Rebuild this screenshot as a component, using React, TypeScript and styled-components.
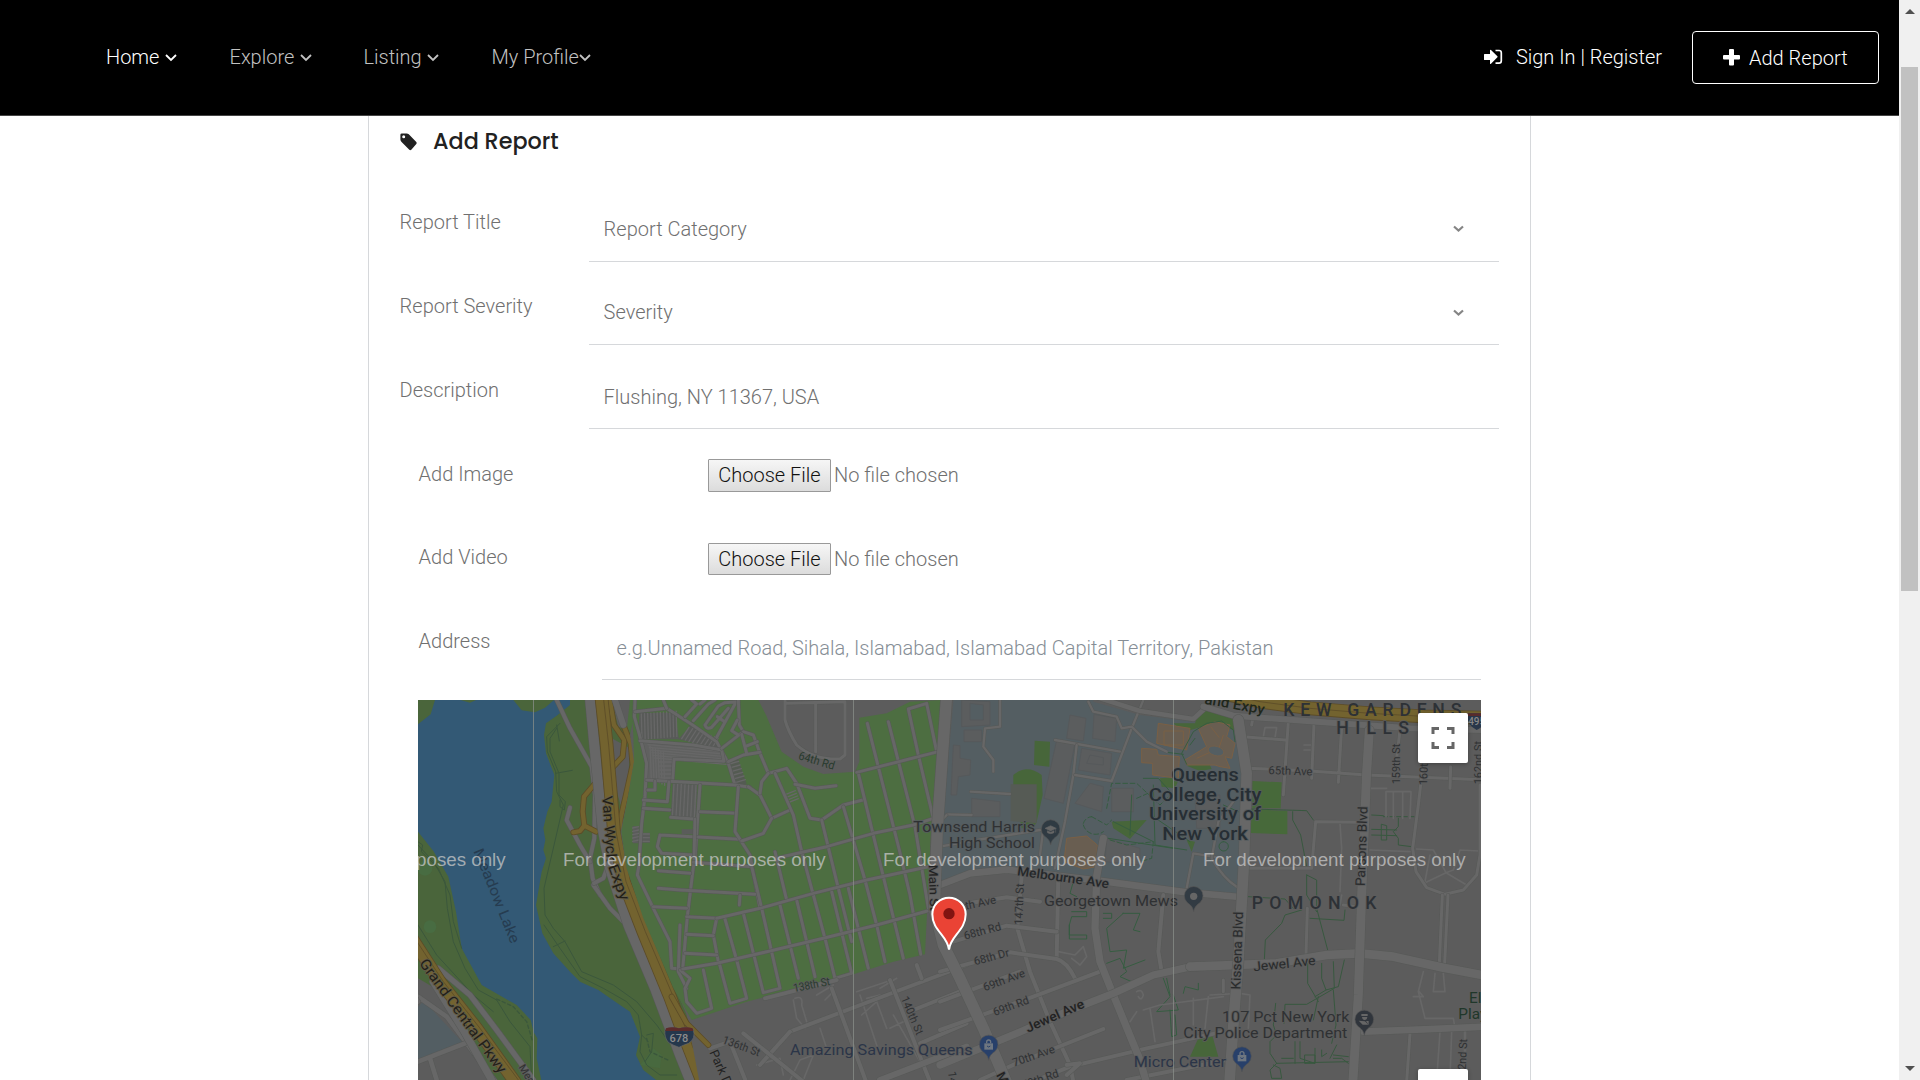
import React from "react";
import styled, { createGlobalStyle } from "styled-components";

const GlobalStyle = createGlobalStyle`
  * { box-sizing: border-box; }
  html, body { margin: 0; padding: 0; background: #fff; overflow: hidden; }
  body { font-family: Roboto, "Liberation Sans", sans-serif; font-weight: 300; font-size: 20px; line-height: 24px; color: #707070; }
`;

const Page = styled.div`
  display: flex;
  width: 1920px;
  height: 1080px;
  overflow: hidden;
`;
const Main = styled.div`
  flex: 1;
  display: flex;
  flex-direction: column;
`;
const Header = styled.header`
  height: 116px;
  flex: none;
  background: #000;
  border-bottom: 1px solid #444;
  display: flex;
  align-items: flex-start;
  justify-content: space-between;
  padding: 31px 20px 0 106px;
`;
const Nav = styled.nav`
  display: flex;
  padding-top: 14px;
`;
const NavItem = styled.a<{ $active?: boolean; $width: number; $gap: number }>`
  display: flex;
  width: ${(p) => p.$width}px;
  gap: ${(p) => p.$gap}px;
  color: ${(p) => (p.$active ? "#fff" : "#c2c2c2")};
  white-space: nowrap;
  svg { width: 12px; height: 8px; margin-top: 9px; flex: none; }
`;
const Actions = styled.div`
  display: flex;
  color: #fff;
`;
const SignIn = styled.a`
  display: flex;
  gap: 13px;
  padding-top: 14px;
  margin-right: 30px;
  white-space: nowrap;
  svg { margin-top: 4px; }
`;
const AddButton = styled.button`
  display: flex;
  gap: 9px;
  width: 187px;
  height: 53px;
  padding: 14px 0 0 30px;
  border: 1px solid #fff;
  border-radius: 4px;
  background: transparent;
  color: #fff;
  font: inherit;
  white-space: nowrap;
  svg { margin-top: 3px; }
`;
const Card = styled.section`
  width: 1163px;
  flex: 1;
  min-height: 0;
  overflow: hidden;
  margin-left: 368px;
  border: solid #d6d8db;
  border-width: 0 1px;
  padding: 0 31px 0 30px;
`;
const Title = styled.h4`
  margin: 0;
  height: 84px;
  padding: 12px 0 0 1px;
  display: flex;
  gap: 15px;
  font-family: Poppins, Inter, sans-serif;
  font-size: 22.3px;
  font-weight: 500;
  line-height: 27px;
  color: #212121;
  svg { margin-top: 5px; }
`;
const Row = styled.div<{ $height?: number; $inset?: boolean }>`
  display: flex;
  height: ${(p) => p.$height ?? 84}px;
  padding: ${(p) => (p.$inset ? "0 18px 0 19px" : "0")};
`;
const Label = styled.label<{ $width: number }>`
  width: ${(p) => p.$width}px;
  flex: none;
  padding: 10px 0 0 0.6px;
  white-space: nowrap;
`;
const Field = styled.div<{ $height: number; $top: number; $muted?: boolean }>`
  flex: 1;
  display: flex;
  justify-content: space-between;
  height: ${(p) => p.$height}px;
  padding: ${(p) => p.$top}px 35px 0 14.6px;
  border-bottom: 1px solid #d6d8db;
  color: ${(p) => (p.$muted ? "#868e96" : "#707070")};
  white-space: nowrap;
`;
const Caret = styled.svg`
  margin-top: 8px;
`;
const FilePick = styled.div<{ $top: number }>`
  display: flex;
  align-items: flex-start;
  gap: 3px;
  padding-top: ${(p) => p.$top}px;
  span { padding-top: 4px; white-space: nowrap; }
`;
const FileButton = styled.button<{ $height: number }>`
  width: 123px;
  height: ${(p) => p.$height}px;
  padding: 0 0 1px;
  border: 1px solid #999;
  border-radius: 1px;
  background: linear-gradient(#f6f6f6, #dcdcdc);
  color: #111;
  font: inherit;
  white-space: nowrap;
`;
const MapFrame = styled.div`
  position: relative;
  width: 1063px;
  height: 380px;
  margin-left: 19px;
  overflow: hidden;
`;
const MapSvg = styled.svg`
  display: block;
`;
const MapControl = styled.button<{ $top: number }>`
  position: absolute;
  right: 13px;
  top: ${(p) => p.$top}px;
  width: 50px;
  height: 50px;
  display: grid;
  place-items: center;
  padding: 0;
  border: 0;
  border-radius: 2px;
  background: #fff;
  box-shadow: 0 1px 4px rgba(0, 0, 0, 0.3);
`;
const Scrollbar = styled.div`
  width: 21px;
  background: #f0f0f0;
  display: flex;
  flex-direction: column;
  align-items: center;
  justify-content: space-between;
  padding: 9px 0;
`;
const Thumb = styled.div`
  width: 17px;
  height: 524px;
  margin: 53px 0 auto;
  background: #c1c1c1;
`;
const Arrow = styled.i<{ $down?: boolean }>`
  border: 5px solid transparent;
  border-width: ${(p) => (p.$down ? "5px 5px 0" : "0 5px 5px")};
  border-color: ${(p) => (p.$down ? "#505050 transparent transparent" : "transparent transparent #505050")};
`;

const LAND = "#5c5c5c";
const ROAD = "#676767";
const PARK = "#4a653b";
const CEMETERY = "#4d6e41";
const CAMPUS = "#545e62";
const GOLD = "#73632f";
const TRAIL = "#3b573c";

type Stroke = { d: string; w?: number; c?: string; dash?: string };

const Lines = ({ items, w = 9, c = ROAD }: { items: (string | Stroke)[]; w?: number; c?: string }) => (
  <g fill="none" strokeLinejoin="round" strokeLinecap="round">
    {items.map((it, i) => {
      const s: Stroke = typeof it === "string" ? { d: it } : it;
      const width = s.w ?? w;
      const color = s.c ?? c;
      return (
        <React.Fragment key={i}>
          {color === ROAD && width > 6 && <path d={s.d} stroke="#575957" strokeWidth={width + 3} />}
          {color === GOLD && <path d={s.d} stroke="#5c4c28" strokeWidth={width + 5} />}
          <path d={s.d} stroke={color} strokeWidth={width} strokeDasharray={s.dash} />
        </React.Fragment>
      );
    })}
  </g>
);

type TagProps = {
  x: number; y: number; size?: number; r?: number; w?: number; color?: string; area?: boolean;
  weight?: number; anchor?: "start" | "middle" | "end"; halo?: string; children: string;
};
const Tag = ({ x, y, size = 34, r = 0, w, color = "#2f3133", area, weight = 400, anchor = "start", halo = LAND, children }: TagProps) => (
  <text
    x={x} y={y} fontSize={size} fontWeight={weight} fill={color} textAnchor={anchor}
    textLength={w} lengthAdjust={area ? "spacing" : "spacingAndGlyphs"} transform={r ? `rotate(${r} ${x} ${y})` : undefined}
    stroke={halo} strokeWidth={halo === "none" ? 0 : 5} paintOrder="stroke" strokeLinejoin="round"
  >
    {children}
  </text>
);

const Poi = ({ x, y, color = "#2f3a42", kind }: { x: number; y: number; color?: string; kind: "school" | "dot" | "bag" | "badge" }) => (
  <g transform={`translate(${x} ${y})`}>
    <path d="M0 46C-3 30-10 26-20 18A28 28 0 1 1 20 18C10 26 3 30 0 46Z" fill={color} stroke="#555" strokeWidth="2" />
    {kind === "dot" && <circle r="11" fill="#666" />}
    {kind === "school" && <path d="M-17-4L0-12L17-4L0 4ZM-10 3V9Q0 15 10 9V3L0 8ZM15-3V9" fill="#666" stroke="#666" strokeWidth="1.5" />}
    {kind === "bag" && (
      <g fill="none" stroke="#6e7680" strokeWidth="4">
        <path d="M-13-5H13V14H-13Z" fill="#6e7680" stroke="none" />
        <path d="M-6-5V-9A6 6 0 0 1 6-9V-5" />
        <path d="M-5 3Q0 9 5 3" stroke={color} strokeWidth="3" />
      </g>
    )}
    {kind === "badge" && <path d="M-9-18H10V-12H-9ZM-7-9H9Q8 0 1 0Q-6 0-7-9ZM-17 2L2 4L12 14H-5ZM5 3H13V15Z" fill="#666" />}
  </g>
);

const hatch = (x: number, y: number, n: number, dx: number, dy: number, lx: number, ly: number) =>
  Array.from({ length: n }, (_, i) => `M${x + i * dx} ${y + i * dy}l${lx} ${ly}`).join("");

const WestShore = () => (
  <g transform="translate(-24 -15)">
    <path d="M0 0H900V1160H0Z" fill={PARK} />
    <path d="M75 15L62 58L24 88V410L70 468L115 545L138 650L155 760L215 870L320 930L362 975L371 1012L382 1030L380 1090L395 1160H745L700 1125L678 1080L690 1025L660 950L630 930L565 885L510 860L480 830L430 775L397 715L378 630L395 530L408 490L400 465L406 435L400 400L412 350L425 320L433 240L408 175L402 120L408 85L440 62L480 30V15H432L405 38L375 52L335 46L310 15H198L180 23L152 15Z" fill="#335975" />
    <circle cx="60" cy="695" r="19" fill="#486c42" /><circle cx="45" cy="520" r="22" fill="#486c42" />
    <path d="M690 1110L730 1060L755 1080L750 1120Z" fill="#48693f" />
    <path d="M24 850L110 900L260 1160H24Z" fill={LAND} />
    <path d="M24 935L42 918L160 1045L24 1095Z" fill="#535e63" />
    <path d="M590 15H700L690 60L700 130L655 120Z" fill={CEMETERY} />
    <path d="M605 15H660L650 105L625 95Z" fill={LAND} />
    <Lines w={3} c={TRAIL} items={[
      "M24 450L70 500L105 560L112 640L130 740L165 820L205 885L260 915", "M24 440L38 450L34 470L85 520L120 600L130 680L155 760", "M24 690L80 780L190 900L250 950", "M260 915L300 980L360 1055L365 1155",
      "M450 85L410 125L412 170L437 230L440 290L460 330L402 580L405 660L430 700L465 740L515 830L610 870L680 920L740 990L790 1060",
      "M440 100L420 130L420 170L447 235L447 300L466 320L463 345L450 335V315M437 235L487 226M440 90L448 138",
      "M402 690L450 760L510 845L580 880L650 920L685 960L695 1020L690 1070L710 1110L750 1140H800", "M710 1020L730 1015L725 1070L705 1100M695 1020L715 1040", "M430 755L465 738"]} />
    <Lines w={4} c={TRAIL} items={[{ d: "M260 912L310 935L350 980L368 1040", dash: "10 8" }, { d: "M710 1030L720 1070L780 1098", dash: "10 8" }]} />
    <Lines w={12} items={["M440 15L480 100L545 215L555 300L553 430L540 490L548 550L570 600", "M480 338L470 375L510 450L540 500", "M550 570L600 640L650 690", "M595 510L580 550L552 565"]} />
    <Lines w={14} items={["M24 905L110 965L260 1165", "M24 920L10 900M24 1100L165 1045M60 1090L80 1155", { d: "M70 860L160 1005L245 1155", w: 22 }, { d: "M85 820L180 900L260 1005L370 1155", w: 16 }]} />
    <Lines c={GOLD} items={[{ d: "M0 720L90 860L200 1000L325 1175", w: 34 }]} />
    <path d="M0 708L100 860L210 1000L340 1175" fill="none" stroke="#5c4c28" strokeWidth="2.5" />
    <path d="M605 130L660 160L655 250L632 330L612 260Z" fill={LAND} />
    <Lines c={GOLD} w={13} items={["M600 20L612 90L643 135L638 185L610 215", "M642 95L662 145L668 210L650 290L632 370L626 440L650 540", "M553 268L522 305L518 350L523 392L558 410M490 412L510 408L523 392"]} />
    <Lines w={30} items={["M540 10L553 150L566 280L578 400L600 520L655 690L735 880L810 1080L850 1180", { d: "M615 15L640 90", w: 18 }]} />
    <Lines c={GOLD} w={36} items={["M574 5L590 150L602 290L612 410L642 560L700 710L780 905L830 1040L885 1180"]} />
    <path d="M580 5L596 150L608 290L618 410L648 560L706 710L790 905L850 1060" fill="none" stroke="#5c4c28" strokeWidth="2.5" />
    <Tag x={190} y={468} r={68} size={44} w={302} color="#263c50" halo="none">Meadow Lake</Tag>
    <Tag x={325} y={1117} r={58} size={32} color="#303030">Mea</Tag>
  </g>
);

const ParkingLots = () => (
  <g transform="translate(-240 15)">
    <path d="M118 38H225L237 118H115Z" fill="#585a58" />
    <path d="M235 118L272 75L350 125L362 148Z" fill="#585a58" />
    <path d="M128 118L365 145L375 187L222 178L218 240H140Z" fill="#606160" />
    <path d="M218 250L292 254L287 356L212 352ZM245 388H280V402H245ZM98 378L116 380V430H98ZM124 398H150V428H124Z" fill="#5a5c5a" />
    <path d="M385 188L415 178L440 252L408 258Z" fill="#545b52" />
    <Lines w={4} items={[
      hatch(124, 42, 12, 9.5, -0.8, 2, 76), hatch(245, 116, 9, 11, 4, 22, -34), hatch(140, 126, 7, 4, 8, 225, 20),
      hatch(150, 138, 6, 8, 4, 4, 98), hatch(178, 186, 5, 1, 12, 38, 0), hatch(222, 252, 7, 11, 0.5, -5, 100),
      hatch(388, 192, 6, 4, 11, 28, -8), hatch(556, 284, 4, 3, 8, 30, -12), hatch(98, 384, 5, 0, 10, 18, -4), hatch(126, 402, 3, 0, 11, 22, 0)]} />
    <Lines w={9} items={[
      "M105 0L103 50L120 110L140 190L135 290L125 370L118 480", "M105 35L200 25L270 70L350 125L385 190L405 255", "M190 0L200 25",
      "M120 122L280 135L365 150L372 184L222 177L218 240", "M140 240L405 255L450 262", "M165 243V270H143", "M207 245L202 305L130 300", "M130 325L210 330", "M212 352L290 358", "M300 255L292 370L285 480",
      "M300 335L410 340", "M180 405L420 418M180 405L172 440L185 460L280 465",
      "M255 50L290 12L275 0M300 12L315 0", "M280 62L325 12L345 0", "M315 75L355 18L375 8L415 5M315 75Q320 90 335 82L385 25M350 112L405 12M352 50L372 64", "M415 0L418 75L430 95",
      "M365 145L430 95M412 60L395 92L415 105"]} />
  </g>
);

const Cemetery = () => (
  <g transform="translate(786 -15)">
    <path d="M-125 0H1500V1170H60L20 960L-45 805L-110 660L-160 520L-178 410L-155 300L-138 200L-150 120Z" fill={LAND} />
    <path d="M-148 0H235V15L258 60L305 170L370 215L430 237L525 230L538 200V68L620 55L690 20L785 15L780 170L755 370L735 778L640 800L520 838L200 920L35 975L-20 880L-110 670L-160 520L-176 410L-155 300L-138 200L-140 120Z" fill={CEMETERY} />
    <ParkingLots />
    <Lines w={9} items={[
      "M-120 490L-128 540L-80 640L-30 740L-25 820L10 822",
      "M205 275L240 300L275 370L330 345", "M45 372L42 500L22 665L8 822", "M175 275L165 410L210 480L240 640", "M185 438L250 415L275 370", "M40 502L215 515", "M-65 527L30 535M-65 580L0 585L225 598", "M180 600L178 630", "M-80 635L20 640M20 665L110 670L100 720L115 800", "M20 718L100 722M15 775L110 780M0 690L-5 830L20 880",
      "M70 825L95 940L50 955L20 920L15 880L30 850L0 825", "M118 805L150 925L200 910L170 795", "M135 672L170 795M190 655L250 893L300 880L245 640L215 515", "M300 630L355 850M350 615L405 845", "M285 470L320 615",
      "M190 110L220 120L240 175L265 235L320 220L350 265L390 370L425 375L490 330L548 315", "M345 268L405 280L468 272", "M145 200L190 180L240 172M185 118L200 175M195 155L232 140M240 295L245 260L265 235",
      "M285 235L340 360L365 470L400 600L435 730L465 850L515 835L455 590", "M425 375L475 580L515 740", "M490 335L555 555L590 690L615 800", "M505 580L565 820", "M535 235L610 545L670 790", "M562 85L658 465L690 600L722 778", "M625 80L705 395L745 640", "M770 170L740 25L685 42L715 180L760 370",
      "M530 232L775 170", "M300 487L440 455L580 415L700 390L760 370", "M110 670L240 640L400 595L560 555L745 515", "M8 822L110 805L270 768L430 730L590 690L742 648",
      "M315 15V75Q325 110 350 150Q400 195 480 192L495 180V20M320 25L495 20M407 25V170"]} />
    <Lines w={5} items={["M340 915L350 970L375 1000M345 910Q370 900 365 930L380 980M410 900L460 870M435 915L460 890M530 890L620 860M545 960L590 920L620 1000M600 880L650 850M640 960L720 1100M560 910L600 900M230 1110L300 1090L310 1140M330 1155L360 1095L400 1080L370 1155M420 1000L440 1060M630 1000L670 980M540 900L600 1080"]} />
    <Lines w={12} items={["M255 910L470 855", "M330 1010L660 885L860 810", "M330 1010L240 1110", "M455 880L560 1165", "M630 855L730 1110L750 1160", "M700 945L850 885M710 810L725 850", "M720 1045L860 985", { d: "M600 1155L860 1055", w: 18 }, "M190 1015L370 1160", "M90 1060L150 1040L200 1165"]} />
    <Lines c={GOLD} w={13} items={["M-25 905L20 985L85 1050"]} />
    <Tag x={353} y={192} r={17} size={35} w={112} color="#293b2e" halo="none">64th Rd</Tag>
    <Tag x={343} y={891} r={-11} w={110} color="#293b2e">138th St</Tag>
    <Tag x={125} y={1044} r={20} w={118}>136th St</Tag>
    <Tag x={662} y={910} r={67} w={122}>140th St</Tag>
    <Tag x={88} y={1072} r={66} size={38} color="#222">Park Dr</Tag>
    <Tag x={804} y={1130} r={83}>141st St</Tag>
  </g>
);

const Campus = () => (
  <g transform="translate(1566 -15)">
    <path d="M42 0L-8 560L110 528L250 518L480 555L890 598L920 400L915 250L875 70L760 80L600 60L460 20V0Z" fill={CAMPUS} />
    <path d="M0 15H8L5 85L0 100Z" fill={CEMETERY} />
    <g fill="#5b5d5e" stroke="#56595b" strokeWidth="3">
      <path d="M65 15L150 20V90L65 95ZM90 25V75H130V30ZM72 105H125V140H72ZM390 60L438 70L430 138L380 130ZM462 58L530 70L525 140L458 130ZM350 135L405 145L370 325L312 310ZM425 160L515 175L510 240L415 225ZM450 180L490 188V210L440 205ZM450 265L490 275L485 350L405 325ZM515 280H580V350H515ZM95 310L180 320V365H95ZM40 150L60 152V190L92 195L90 240L55 245L50 300H33ZM500 430L600 460V510L495 500Z" />
      <path d="M765 300H840V400H770Z" />
    </g>
    <g fill="#47663a">
      <path d="M284 137L330 140L328 215L282 210ZM220 270V240Q260 205 305 240L308 300L290 380L280 400H245Z" />
      <path d="M775 55L795 35L890 72L905 115L880 105L820 85L730 112L700 85H765ZM515 380L620 375L570 432L520 400ZM660 250L720 245L705 280L665 275ZM740 212L800 190L815 222L780 228ZM740 435L765 440L755 470Z" />
      <path d="M775 1030L815 1015L835 1085H750Z" />
    </g>
    <path d="M212 268H290V385L212 378Z" fill="#565b55" />
    <g fill="#695e51" stroke="#7a6045" strokeWidth="3">
      <path d="M655 85L750 100L740 165L650 145ZM605 160L650 163L655 180L718 185L715 250L638 240V205L605 203Z" />
      <path d="M735 195L800 155L775 100L825 80L870 90L860 125L885 145L875 190L855 185L870 220L840 215L825 210L740 210Z" />
      <path d="M380 430L440 423L472 450L468 515L430 522L372 500Z" />
      <path d="M672 108H730V150H672ZM812 95L838 128M850 120L835 165M770 190L810 172" fill="none" />
    </g>
    <ellipse cx="828" cy="168" rx="24" ry="14" transform="rotate(15 828 168)" fill={CAMPUS} stroke="#7a6045" strokeWidth="2" />
    <Lines w={3} c="#365c41" items={[
      "M740 208L725 175L760 110L800 85L845 78L880 105L885 140M680 172L730 178M750 150L765 130", "M610 250L655 250L700 300M640 270L645 450L740 465M520 380L640 440M505 430L700 460M640 365L750 440M575 300L570 420",
      "M395 650H440V665H395L388 690V720H440V732H388V690M400 560L390 595L410 605M490 655H515V670H490M548 655H600L580 705L600 710M550 655L500 700L510 770L560 765L550 820L615 795M500 805L540 790L560 830L540 845L575 860M670 850L690 905L650 950L715 945L700 900M680 850L690 900M690 945L695 1025L710 1020L705 960M730 895L735 875L775 885V865",
      "M850 440A14 14 0 1 0 852 468A14 14 0 1 0 850 440M850 330L895 350"]} />
    <Lines w={3} c="#365c41" items={[{ d: "M430 385A28 28 0 0 1 455 365M455 365L500 390L515 375M430 390A38 38 0 0 0 490 410M500 340L515 265L590 265L660 330L690 300M590 310L635 290", dash: "14 8" }, { d: "M510 435L560 450L640 440L635 490L600 500", dash: "14 8" }]} />
    <Lines w={7} items={["M180 15V95L135 100L130 155L160 195V230", "M92 290L210 297M20 358L95 360M0 455L110 435L300 405M310 400L300 480", "M345 135L540 170", "M410 150L400 240L375 380L345 520", "M405 240L515 258L575 100L610 15", "M445 20L460 50L530 65L545 100L575 95L620 140L680 170", "M760 475L740 580M760 475L850 490", "M20 360L0 380", "M890 575Q850 550 815 490L835 380L880 320"]} />
    <Lines w={20} items={["M0 570L90 535L200 524L470 556L740 592L900 606"]} />
    <Lines w={12} items={["M245 545L232 700L270 830L330 980L390 1110L400 1160", "M355 540L350 790", "M670 600L655 770L665 830", "M85 625L200 607L300 620", "M40 740L200 692L350 710", "M0 830L210 772L350 792Q380 800 405 850", "M0 920L240 830", "M0 1005L280 905L480 830", "M120 1155L230 1105L490 1002", "M290 1155L390 1115L620 1060L850 1010", "M380 1110L420 1105L380 1140M560 1155L860 1095"]} />
    <Lines w={5} items={["M355 770L405 780L430 755L440 785L420 810L395 790M590 890Q605 880 610 900Q605 920 595 905M570 980L590 950M610 945L660 930L850 905M630 940L645 1040M760 910V990M805 905L795 1000"]} />
    <Lines w={22} items={["M490 430L470 545L465 700L480 800L520 900L600 1095L620 1165", "M0 1110L230 1015L380 950L520 895L640 840L740 818L840 812", { d: "M450 0L600 48L760 72L800 35", w: 14 }]} />
    <Lines w={34} items={["M20 0L-8 400L-17 640L10 750L60 850L130 1000L205 1175"]} />
    <Tag x={-34} y={510} r={88} size={37} w={138} color="#222">Main St</Tag>
    <Tag x={285} y={410} anchor="end" size={45} w={365} halo="#565c5f">Townsend Harris</Tag>
    <Tag x={285} y={458} anchor="end" size={45} w={258} halo="#565c5f">High School</Tag>
    <Poi x={332} y={404} kind="school" />
    <Tag x={230} y={541} r={8} size={39} weight={500} w={278} color="#25282a">Melbourne Ave</Tag>
    <Tag x={247} y={690} r={-88} w={124}>147th St</Tag>
    <Tag x={78} y={644} r={-12}>th Ave</Tag>
    <Tag x={75} y={734} r={-15} w={114}>68th Rd</Tag>
    <Tag x={105} y={811} r={-15} w={108}>68th Dr</Tag>
    <Tag x={134} y={889} r={-20} w={132}>69th Ave</Tag>
    <Tag x={164} y={963} r={-20} w={112}>69th Rd</Tag>
    <Tag x={264} y={1013} r={-24} size={40} weight={500} w={188} color="#222">Jewel Ave</Tag>
    <Tag x={222} y={1115} r={-19} w={132}>70th Ave</Tag>
    <Tag x={250} y={1182} r={-19} w={115}>70th Rd</Tag>
    <Tag x={168} y={1140} r={62} size={38} weight={500} color="#222">Main St</Tag>
    <Tag x={312} y={634} size={46} w={402}>Georgetown Mews</Tag>
    <Poi x={761} y={604} color="#323b43" kind="dot" />
    <Tag x={98} y={1080} anchor="end" size={46} w={548} color="#2b3548">Amazing Savings Queens</Tag>
    <Poi x={146} y={1050} color="#28406a" kind="bag" />
  </g>
);

const Pomonok = () => (
  <g transform="translate(2376 -15)">
    <path d="M127 258L215 262L212 340H127ZM125 343L232 348V418L122 414Z" fill="#47693a" />
    <Lines w={3} c="#38583f" items={["M125 342L290 347L310 375M248 350V375L272 420L290 515M290 540L320 555V640L353 765M290 540V600L320 650M300 670L402 676L405 645M115 605L225 612L250 640M275 645L225 660L215 685L166 735L163 795M293 800V865L325 920M335 805V850L348 885L385 875L403 795M370 800L373 880L290 928H225L222 985M370 885L378 990L365 1045M348 885L315 905M325 905L310 975M197 925L190 990L200 1020L180 1040V1075L200 1105L415 1100M200 1105L180 1125L185 1150H215L210 1120L190 1110M255 1040V1105M270 1040V1090L315 1105V1060M285 1080H315V1105H285ZM335 1065V1085L350 1075M370 1080L415 1085M370 1090H395L415 1105M380 1050L360 1090M215 1090H250", "M485 360L520 362M485 403L560 405M485 420L560 422M515 388L530 392V435H515ZM565 370V395L550 410L565 430V450L605 455"]} />
    <Lines w={3} c="#38583f" items={[{ d: "M520 365H615", dash: "12 8" }]} />
    <Lines w={5} items={["M160 125L165 98H200L195 128M282 150H305M282 165H305", "M528 290V365M550 290V370M578 290V370M603 290L600 370M528 290H603", "M480 280H530M480 465L600 470M390 385L395 460L390 590M620 462L670 465L690 500L708 533L730 525L750 465L808 468M660 480L645 560M708 533L642 565M708 533L770 570M670 890H705L700 835M675 835L670 890M0 900L90 895L120 900L115 1000M390 630L395 600M610 905H640L628 890M645 970H730L735 1000M690 1010L680 1155M640 830L625 890L645 970M725 1010L720 1150"]} />
    <Lines w={9} items={["M100 125L225 135M125 90L130 60M235 80L220 300M312 85L305 250M395 95L385 262M115 220L300 228L470 240L825 255", "M320 380L450 382M317 380L305 520L115 520M292 640L288 780M570 105L560 190M722 215L720 280", "M640 200L625 330L608 460L618 530L650 578L705 598L760 585L800 540L810 480V270", "M697 600L688 805M714 600L704 805M600 1015L590 1160M765 1010V1155M40 855V890M400 630L440 635"]} />
    <Lines w={20} items={["M460 1010L640 1003L825 995", { d: "M-60 815L30 812L200 805L350 780L450 775L550 785L700 818L825 842", w: 26 }, { d: "M-20 35L70 62L320 80L600 100L825 105", w: 18 }]} />
    <Lines w={27} items={["M478 105L470 230L455 600L445 900L428 1170", { d: "M85 75L110 235L102 500L85 800L72 960L58 1170", w: 32 }]} />
    <Lines c={GOLD} w={36} items={["M60 0L150 20L300 40L480 55L640 64L830 68"]} />
    <path d="M60 0L150 20L300 40L480 55L640 64L830 68" fill="none" stroke="#5c4c28" strokeWidth="2.5" />
    <Tag x={-18} y={26} r={10} size={43} w={182} weight={500} color="#20271c" halo="none">and Expy</Tag>
    <Tag area x={220} y={62} size={53} weight={500} w={534} color="#2d3136" halo="none">KEW GARDENS</Tag>
    <Tag area x={379} y={118} size={53} weight={500} w={218} color="#2d3136">HILLS</Tag>
    <Tag area x={125} y={643} size={53} weight={500} w={374} color="#2d3136">POMONOK</Tag>
    <Tag x={175} y={237} r={2} w={132}>65th Ave</Tag>
    <Tag x={571} y={268} r={-90} w={122}>159th St</Tag>
    <Tag x={651} y={271} r={-88} w={122}>160th St</Tag>
    <Tag x={816} y={268} r={-90} w={130}>162nd St</Tag>
    <Tag x={464} y={574} r={-88} size={40} w={240} color="#292b2c">Parsons Blvd</Tag>
    <Tag x={91} y={884} r={-88} size={40} w={234} color="#292b2c">Kissena Blvd</Tag>
    <Tag x={131} y={829} r={-6} size={39} w={188} color="#292b2c">Jewel Ave</Tag>
    <Tag x={765} y={1162} r={-87} w={130}>162nd St</Tag>
    {["Queens", "College, City", "University of", "New York"].map((t, i) => (
      <Tag key={t} x={-15} y={[257, 317, 376, 436][i]} anchor="middle" size={57} weight={500} w={[202, 338, 336, 256][i]} color="#262e34" halo="#565c5f">{t}</Tag>
    ))}
    <Tag x={418} y={980} anchor="end" size={46} w={382}>107 Pct New York</Tag>
    <Tag x={412} y={1029} anchor="end" size={46} w={492}>City Police Department</Tag>
    <Poi x={463} y={975} color="#30353c" kind="badge" />
    <Tag x={48} y={1115} anchor="end" size={46} w={277} color="#2b3548">Micro Center</Tag>
    <Poi x={96} y={1085} color="#28406a" kind="bag" />
    <Tag x={777} y={924} size={46} color="#20372a">Electchester</Tag>
    <Tag x={745} y={973} size={46} color="#20372a">Playground</Tag>
    <g transform="translate(800 80)"><path d="M-28-25H28Q30 12 0 25Q-30 12-28-25Z" fill="#29374a" /><path d="M-28-25H28V-17H-28Z" fill="#592c2c" /><text x="0" y="10" textAnchor="middle" fontSize="30" fontWeight="500" fill="#888">495</text></g>
  </g>
);

const MapDrawing = () => (
  <MapSvg width="1063" height="380" viewBox="0 0 3189 1140" fontFamily="Roboto, sans-serif">
    <rect width="3189" height="1140" fill={LAND} />
    <WestShore />
    <Cemetery />
    <Campus />
    <Pomonok />
    <g transform="translate(-24 -15)">
      <Tag x={577} y={304} r={86} size={43} w={196} color="#221f18" halo="#625c48">Van Wyck</Tag>
      <Tag x={594} y={514} r={70} size={43} w={112} color="#221f18" halo="#625c48">Expy</Tag>
      <Tag x={26} y={805} r={54} size={44} w={412} color="#221f18" halo="#625c48">Grand Central Pkwy</Tag>
      <path d="M765 1004Q785 994 807 1000Q830 994 850 1004Q858 1030 836 1045Q818 1051 807 1057Q790 1051 776 1043Q762 1028 765 1004Z" fill="#25374c" stroke="#686868" strokeWidth="2" />
      <path d="M768 1000Q785 994 807 1000Q830 994 848 1000L850 1008H766Z" fill="#5c2b2b" />
      <text x="807" y="1041" textAnchor="middle" fontSize="33" fontWeight="500" fill="#8b8b8b">678</text>
    </g>
    <g stroke="#8a8f8a" strokeOpacity=".75" strokeWidth="3"><path d="M346.500 0V1140M1306.500 0V1140M2266.500 0V1140" /></g>
    <g fontFamily="Liberation Sans, Arial, sans-serif" fontSize="54" fontWeight="400" fill="#c8c8c8" fillOpacity=".76">
      {[-525, 435, 1395, 2355].map((x) => <text key={x} x={x} y="499" textLength="788" lengthAdjust="spacingAndGlyphs">For development purposes only</text>)}
    </g>
    <path d="M1593 749C1589 707 1543 692 1543 643A50 50 0 0 1 1643 643C1643 692 1597 707 1593 749Z" fill="#ea4335" stroke="#fff" strokeWidth="6" />
    <circle cx="1593" cy="641" r="17" fill="#811411" />
  </MapSvg>
);

const SelectCaret = ({ drop = 0 }: { drop?: number }) => (
  <Caret width="11" height="10" viewBox={`0 ${-drop} 11 10`}><path d="M1 1.500L5.500 5.500L10 1.500" fill="none" stroke="#858585" strokeWidth="2.200" /></Caret>
);

const navItems = [
  { label: "Home", width: 123.500, gap: 5.500, active: true },
  { label: "Explore", width: 134, gap: 5.500 },
  { label: "Listing", width: 128, gap: 5.500 },
  { label: "My Profile", width: 110, gap: 0.5 },
];

export default function App() {
  return (
    <Page>
      <GlobalStyle />
      <Main>
        <Header>
          <Nav>
            {navItems.map((n) => (
              <NavItem key={n.label} $active={n.active} $width={n.width} $gap={n.gap}>
                {n.label}
                <svg viewBox="0 0 12 8"><path d="M1 1L6 6L11 1" fill="none" stroke="currentColor" strokeWidth="1.8" /></svg>
              </NavItem>
            ))}
          </Nav>
          <Actions>
            <SignIn>
              <svg width="19" height="16" viewBox="0 0 19 16">
                <path d="M0 5.5Q0 5 .6 5H6V1.2Q6.2 .3 7 .9L13.4 7.3Q13.9 7.8 13.4 8.3L7 14.7Q6.2 15.3 6 14.4V11H.6Q0 11 0 10.4Z" fill="currentColor" />
                <path d="M11.5 1.5H15Q17.3 1.5 17.3 3.8V11.8Q17.3 14.2 15 14.2H11.5" fill="none" stroke="currentColor" strokeWidth="1.7" />
              </svg>
              Sign In | Register
            </SignIn>
            <AddButton>
              <svg width="17" height="17" viewBox="0 0 17 17">
                <path d="M7 0H10Q11 0 11 1V6H16Q17 6 17 7V9.500Q17 10.500 16 10.500H11V15.500Q11 16.500 10 16.500H7Q6 16.500 6 15.500V10.500H1Q0 10.500 0 9.500V7Q0 6 1 6H6V1Q6 0 7 0Z" fill="currentColor" />
              </svg>
              Add Report
            </AddButton>
          </Actions>
        </Header>
        <Card>
          <Title>
            <svg width="18" height="18" viewBox="0 0 18 18">
              <path fillRule="evenodd" d="M.4 1.800Q.4 .4 1.800 .4H6.600Q7.800 .4 8.800 1.300L16.300 8.900Q17.200 9.900 16.300 10.900L11.300 16.700Q10.300 17.600 9.300 16.700L1.600 9Q.4 7.800 .4 6.600ZM3.700 2.200A1.500 1.500 0 1 0 3.700 5.200A1.500 1.500 0 1 0 3.700 2.200Z" fill="currentColor" />
            </svg>
            Add Report
          </Title>
          <Row><Label $width={190}>Report Title</Label><Field $height={62} $top={17}>Report Category<SelectCaret /></Field></Row>
          <Row><Label $width={190}>Report Severity</Label><Field $height={61} $top={16}>Severity<SelectCaret drop={1} /></Field></Row>
          <Row><Label $width={190}>Description</Label><Field $height={61} $top={17}>Flushing, NY 11367, USA</Field></Row>
          <Row $inset $height={83}><Label $width={290}>Add Image</Label><FilePick $top={7}><FileButton $height={33}>Choose File</FileButton><span>No file chosen</span></FilePick></Row>
          <Row $inset><Label $width={290}>Add Video</Label><FilePick $top={8}><FileButton $height={32}>Choose File</FileButton><span>No file chosen</span></FilePick></Row>
          <Row $inset $height={81}><Label $width={184}>Address</Label><Field $height={61} $top={17} $muted>e.g.Unnamed Road, Sihala, Islamabad, Islamabad Capital Territory, Pakistan</Field></Row>
          <MapFrame>
            <MapDrawing />
            <MapControl $top={13}>
              <svg width="24" height="24" viewBox="0 0 24 24"><path d="M2 8V2.5H8M16 2.5H22V8M22 16V21.5H16M8 21.5H2V16" fill="none" stroke="#666" strokeWidth="3" /></svg>
            </MapControl>
            <MapControl $top={369} />
          </MapFrame>
        </Card>
      </Main>
      <Scrollbar><Arrow /><Thumb /><Arrow $down /></Scrollbar>
    </Page>
  );
}
